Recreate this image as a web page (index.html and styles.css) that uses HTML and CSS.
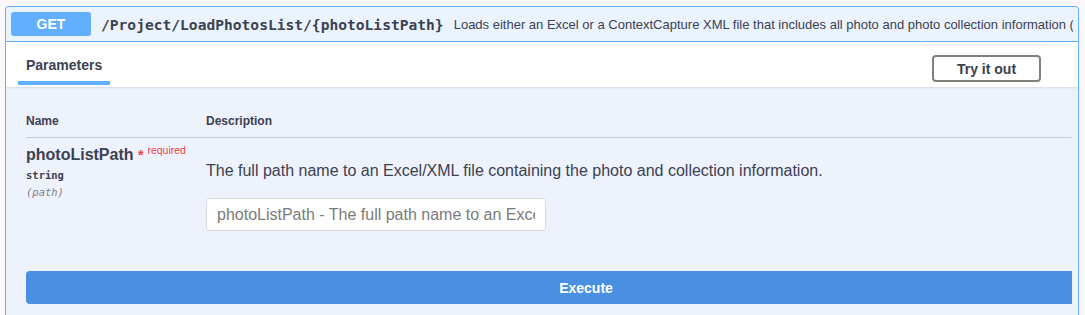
FILE: index.html
```html
<!DOCTYPE html>
<html lang="en">

<head>
    <meta charset="UTF-8">
    <title>Swagger - LoadPhotosList</title>
    <link rel="stylesheet" href="styles.css">
</head>

<body>
    <div class="opblock">
        <!-- Summary -->
        <div class="summary">
            <span class="method">GET</span>
            <span class="path">/Project/LoadPhotosList/{photoListPath}</span>
            <span class="summary-desc">Loads either an Excel or a ContextCapture XML file that includes all photo and photo collection information (</span>
        </div>

        <!-- Parameters header -->
        <div class="section-header">
            <div class="tab">Parameters</div>
            <div class="try-wrap">
                <button class="try-btn">Try it out</button>
            </div>
        </div>

        <!-- Parameters table -->
        <div class="section-body">
            <div class="params-head">
                <div class="col-name">Name</div>
                <div class="col-desc">Description</div>
            </div>
            <div class="param-row">
                <div class="col-name">
                    <div class="param-name">photoListPath <span class="star">*</span><sup class="required">required</sup></div>
                    <div class="param-type">string</div>
                    <div class="param-in">(path)</div>
                </div>
                <div class="col-desc">
                    <p class="param-text">The full path name to an Excel/XML file containing the photo and collection information.</p>
                    <input class="param-input" type="text" placeholder="photoListPath - The full path name to an Excel/XML file containing the photo and collection information.">
                </div>
            </div>
            <button class="execute-btn">Execute</button>
        </div>
    </div>
</body>

</html>
```

FILE: styles.css
```css
/* Page */
body {
    margin: 0;
    padding: 6px 0 0 5px;
    background-color: #fcf7fa;
    font-family: 'Liberation Sans', Arial, sans-serif;
    color: #3b4151;
    overflow: hidden;
}

.opblock {
    width: 1072px;
    border: 1px solid #61affe;
    border-bottom: none;
    border-radius: 4px 4px 0 0;
    background-color: #eef2fd;
    height: 320px;
    overflow: hidden;
}

/* Summary row */
.summary {
    display: flex;
    align-items: center;
    height: 34px;
    padding: 0 5px;
    background-color: #ebf3fe;
    border-bottom: 1px solid #61affe;
    white-space: nowrap;
    overflow: hidden;
}

.summary .method {
    flex: none;
    width: 80px;
    height: 24px;
    line-height: 24px;
    text-align: center;
    background-color: #61affe;
    color: white;
    font-weight: bold;
    font-size: 14px;
    border-radius: 3px;
}

.summary .path {
    flex: none;
    margin-left: 10px;
    font-family: 'DejaVu Sans Mono', monospace;
    font-weight: bold;
    font-size: 14.6px;
    color: #3b4151;
}

.summary .summary-desc {
    margin-left: 10px;
    font-size: 13px;
    overflow: hidden;
}

/* Parameters header */
.section-header {
    display: flex;
    justify-content: space-between;
    align-items: flex-end;
    height: 45px;
    padding: 0 29px 0 12px;
    background-color: #ffffff;
    box-shadow: 0 1px 2px rgba(0, 0, 0, 0.1);
}

.section-header .tab {
    padding: 0 8px 8px;
    font-size: 14px;
    font-weight: bold;
    border-bottom: 4px solid #61affe;
    margin-bottom: 2px;
}

.section-header .try-wrap {
    align-self: flex-start;
    margin-top: 3px;
    padding: 9px 8px 0;
    border-top: 1px solid #f6f2f4;
}

.try-btn {
    width: 109px;
    height: 27px;
    background-color: white;
    border: 2px solid #808080;
    border-radius: 4px;
    font-family: 'Liberation Sans', Arial, sans-serif;
    font-size: 14px;
    font-weight: bold;
    color: #3b4151;
    padding: 0;
}

/* Parameters table */
.section-body {
    margin-right: 6px;
    padding-left: 20px;
    overflow: hidden;
}

.params-head {
    display: flex;
    padding-top: 27px;
    height: 23px;
    font-size: 12px;
    font-weight: bold;
    border-bottom: 1px solid #c8cbd5;
}

.col-name {
    width: 180px;
    flex: none;
}

.param-row {
    display: flex;
    padding-top: 8px;
}

.param-name {
    font-size: 16px;
    font-weight: bold;
    line-height: 18px;
}

.param-name .star {
    color: #f93e3e;
    font-size: 14px;
}

.param-name .required {
    color: #f93e3e;
    font-size: 10.5px;
    font-weight: normal;
    vertical-align: 6px;
    line-height: 0;
    margin-left: 4px;
}

.param-type {
    margin-top: 4px;
    font-family: 'DejaVu Sans Mono', monospace;
    font-size: 10.5px;
    font-weight: bold;
    line-height: 14px;
}

.param-in {
    margin-top: 3px;
    font-family: 'DejaVu Sans Mono', monospace;
    font-size: 10.5px;
    font-style: italic;
    color: #808080;
    line-height: 14px;
}

.param-text {
    margin: 16px 0 0;
    font-size: 16px;
    line-height: 18px;
}

.param-input {
    margin-top: 18px;
    box-sizing: border-box;
    width: 340px;
    height: 33px;
    padding: 0 10px;
    border: 1px solid #d9d9d9;
    border-radius: 4px;
    background-color: white;
    font-family: 'Liberation Sans', Arial, sans-serif;
    font-size: 16px;
    outline: none;
}

.param-input::placeholder {
    color: #7b7b7b;
}

.execute-btn {
    display: block;
    margin-top: 40px;
    width: 1120px;
    height: 33px;
    border: none;
    border-radius: 4px 0 0 4px;
    background-color: #4990e2;
    color: white;
    font-family: 'Liberation Sans', Arial, sans-serif;
    font-size: 14px;
    font-weight: bold;
}
```
